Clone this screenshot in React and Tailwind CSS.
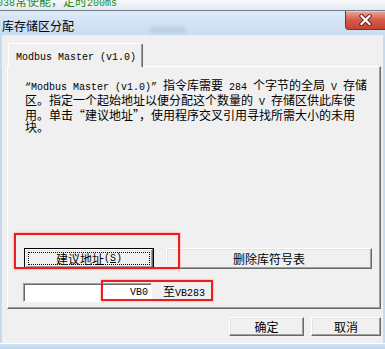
import React from 'react'

const CN = "font-['Noto_Sans_CJK_SC',sans-serif]"
const MONO = "font-['Liberation_Mono','Noto_Sans_CJK_SC',monospace] text-[10px]"

const raised =
  'border border-t-white border-l-white border-r-[#696969] border-b-[#696969] shadow-[inset_-1px_-1px_0_#a0a0a0,inset_1px_1px_0_#e3e3e3]'

function Button({ children, className = '' }) {
  return (
    <div className={`flex items-center justify-center bg-[#f0f0f0] text-[12px] leading-[12px] text-black ${raised} ${className}`}>
      {children}
    </div>
  )
}

function DefaultButton({ children, className = '' }) {
  return (
    <div className={`flex border border-black ${className}`}>
      <div className={`flex flex-1 bg-[#f0f0f0] ${raised}`}>
        <div className="flex flex-1 m-[2px] items-center justify-center border border-dotted border-black text-[12px] leading-[12px]">
          {children}
        </div>
      </div>
    </div>
  )
}

function CloseGlyph() {
  return (
    <svg width="13" height="12" viewBox="0 0 13 12">
      <path d="M2.5 2 L10.5 10 M10.5 2 L2.5 10" stroke="#5a2018" strokeWidth="4" strokeLinecap="square" />
      <path d="M2.5 2 L10.5 10 M10.5 2 L2.5 10" stroke="#ffffff" strokeWidth="2.2" strokeLinecap="square" />
    </svg>
  )
}

export default function App() {
  return (
    <div className={`relative w-[385px] h-[349px] overflow-hidden flex flex-col bg-[#eef1f4] ${CN}`}>
      {/* background window strip */}
      <div className="h-[10px] overflow-hidden bg-gradient-to-b from-[#f7f8fa] to-[#e4e9ef]">
        <div className="-mt-[5px] -ml-[3px] whitespace-nowrap text-[12px] leading-[12px] text-[#1d8a1d]">
          <span className={MONO}>038</span>常使能，定时<span className={MONO}>200ms</span>
        </div>
      </div>

      {/* dialog */}
      <div className="flex-1 flex flex-col border-t border-[#6f7c89] bg-[#c6dbf0]">
        {/* title bar */}
        <div className="relative h-[24px] flex bg-gradient-to-b from-[#dce9f7] to-[#c9ddf2]">
          <div className="pl-[2px] pt-[8px] text-[12px] leading-[13px] text-black whitespace-nowrap">库存储区分配</div>
          <div className="absolute left-[150px] top-[17px] w-[36px] h-[4px] rounded-full bg-[#8c9fb3]/40 blur-[2px]" />
          <div className="ml-auto w-[40px] h-[19px] flex items-center justify-center rounded-bl-[4px] border border-t-0 border-r-0 border-[#7a3329] bg-gradient-to-b from-[#e9a89a] via-[#d55a48] to-[#c7412f] shadow-[inset_0_1px_0_#f3c7bd]">
            <CloseGlyph />
          </div>
        </div>

        {/* client area */}
        <div className="flex-1 flex flex-col ml-[2px] mr-[2px] bg-[#f0f0f0] pl-[5px] pr-[2px] pt-[8px] pb-[7px]">
          {/* tab header */}
          <div className="flex">
            <div className="relative z-10 -mb-px ml-[1px] w-[135px] h-[24px] bg-[#f0f0f0] rounded-t-[2px] border border-b-0 border-t-white border-l-white border-r-[#696969] shadow-[inset_-1px_0_0_#a0a0a0]">
              <div className={`pl-[7px] pt-[8px] leading-[12px] whitespace-nowrap ${MONO}`}>Modbus Master (v1.0)</div>
            </div>
          </div>

          {/* tab panel */}
          <div className="h-[243px] flex flex-col border border-t-white border-l-white border-r-[#696969] border-b-[#696969] shadow-[inset_-1px_-1px_0_#a0a0a0]">
            <div className="pl-[17px] pt-[12px] text-[12px] leading-[12px] text-black whitespace-nowrap [font-feature-settings:'fwid']">
              <div>
                <span className={MONO}>“Modbus Master (v1.0)” </span>指令库需要<span className={MONO}> 284 </span>个字节的全局<span className={MONO}> V </span>存储
              </div>
              <div>
                区。指定一个起始地址以便分配这个数量的<span className={MONO}> V </span>存储区供此库使
              </div>
              <div>用。单击“建议地址”，使用程序交叉引用寻找所需大小的未用</div>
              <div>块。</div>
            </div>

            <div className="flex mt-[115px] pl-[16px] gap-[12px]">
              <DefaultButton className="w-[130px] h-[21px]">
                建议地址<span className={MONO}>(<span className="underline">S</span>)</span>
              </DefaultButton>
              <Button className="w-[206px] h-[21px]">删除库符号表</Button>
            </div>

            <div className="flex items-center mt-[14px] pl-[15px]">
              <div className="w-[129px] h-[19px] flex items-center justify-end pr-[3px] bg-white border border-t-[#a0a0a0] border-l-[#a0a0a0] border-r-white border-b-white shadow-[inset_1px_1px_0_#696969]">
                <span className={`${MONO} leading-[12px]`}>VB0</span>
              </div>
              <div className="ml-[11px] text-[12px] leading-[12px] whitespace-nowrap">
                至<span className={MONO}>VB283</span>
              </div>
            </div>
          </div>

          {/* dialog buttons */}
          <div className="flex justify-end mt-[8px] gap-[7px]">
            <Button className="w-[75px] h-[19px]">确定</Button>
            <Button className="w-[70px] h-[19px]">取消</Button>
          </div>
        </div>

        {/* bottom frame */}
        <div className="h-[6px] border-t border-white bg-gradient-to-b from-[#d3e4f5] to-[#bcd4ee]" />
      </div>

      {/* red annotation boxes */}
      <div className="absolute left-[14px] top-[233px] w-[166px] h-[36px] border-2 border-[#ee1d1d] shadow-[0_0_2px_#ff8080]" />
      <div className="absolute left-[101px] top-[280px] w-[112px] h-[21px] border-2 border-[#ee1d1d] shadow-[0_0_2px_#ff8080]" />
    </div>
  )
}
